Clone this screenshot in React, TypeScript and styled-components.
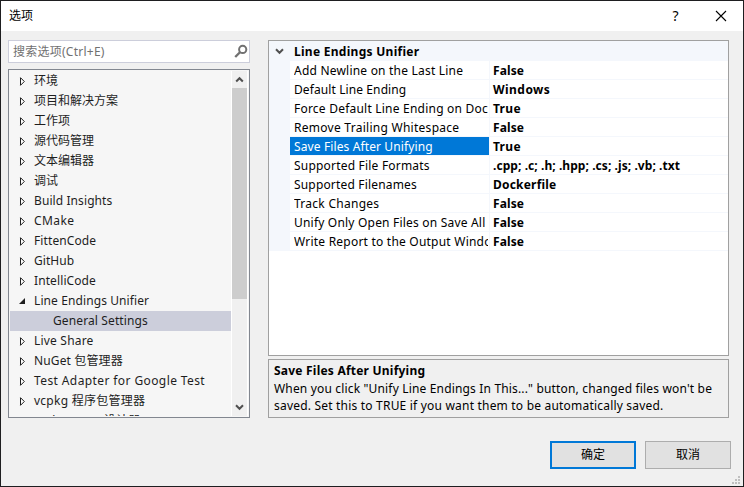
import React from "react";
import styled, { createGlobalStyle } from "styled-components";

const Global = createGlobalStyle`
  * { box-sizing: border-box; }
  body { margin: 0; overflow: hidden; }
`;

const Dialog = styled.div`
  width: 744px;
  height: 487px;
  border: 1px solid #1e1e20;
  background: #f0f0f0;
  color: #000;
  font: 12px/20px "Noto Sans", "Noto Sans CJK SC", sans-serif;
  display: flex;
  flex-direction: column;
  white-space: nowrap;
`;

const TitleBar = styled.header`
  height: 30px;
  flex: none;
  background: #fff;
  display: flex;
  align-items: center;
  padding-left: 8px;
`;

const Title = styled.span`
  flex: 1;
  line-height: 28px;
`;

const CaptionButton = styled.div`
  width: 45px;
  height: 30px;
  display: flex;
  align-items: center;
  justify-content: center;
  font-size: 14px;
  line-height: 28px;
`;

const Body = styled.div`
  display: flex;
  gap: 18px;
  padding: 9px 14px 0 7px;
  height: 387px;
  flex: none;
`;

const LeftPane = styled.div`
  width: 242px;
  display: flex;
  flex-direction: column;
  gap: 6px;
`;

const SearchBox = styled.div`
  height: 23px;
  flex: none;
  border: 1px solid #cccedb;
  background: #fff;
  color: #717171;
  display: flex;
  justify-content: space-between;
  padding: 0 1px 0 4px;
  line-height: 21px;
`;

const Tree = styled.div`
  height: 349px;
  border: 1px solid #828790;
  background: #f6f6f6;
  padding: 1px;
  display: flex;
`;

const TreeList = styled.div`
  flex: 1;
  height: 345px;
  overflow: hidden;
  color: #1e1e1e;
`;

const TreeRow = styled.div<{ $child?: boolean }>`
  height: 20px;
  line-height: 20px;
  display: flex;
  align-items: flex-start;
  gap: 8px;
  padding-left: ${(p) => (p.$child ? 43 : 8)}px;
  background: ${(p) => (p.$child ? "#cccedb" : "transparent")};
`;

const ArrowIcon = styled.svg`
  flex: none;
  margin-top: 5px;
`;

const Fitted = styled.span<{ $spacing: number }>`
  letter-spacing: ${(p) => p.$spacing}px;
`;

const ScrollBar = styled.div`
  width: 17px;
  background: #f0f0f0;
  border-left: 1px solid #fff;
  border-right: 1px solid #fff;
  display: flex;
  flex-direction: column;
`;

const ScrollButton = styled.div`
  height: 17px;
  display: flex;
  align-items: center;
  justify-content: center;
`;

const ScrollThumb = styled.div`
  height: 211px;
  background: #cdcdcd;
`;

const Spacer = styled.div`
  flex: 1;
`;

const RightPane = styled.div`
  width: 461px;
  display: flex;
  flex-direction: column;
  gap: 3px;
`;

const PropertyGrid = styled.div`
  height: 316px;
  border: 1px solid #a0a0a0;
  background: #fff;
`;

const Category = styled.div`
  height: 20px;
  background: #f4f7fc;
  display: flex;
  align-items: flex-end;
  font-weight: 700;
  line-height: 19px;
`;

const Gutter = styled.div`
  width: 21px;
  height: 19px;
  flex: none;
  background: #f4f7fc;
  display: flex;
  align-items: center;
  justify-content: center;
`;

const CategoryName = styled.span`
  padding-left: 4px;
`;

const PropertyRow = styled.div`
  height: 19px;
  line-height: 20px;
  display: flex;
`;

const PropertyName = styled.div<{ $selected?: boolean }>`
  width: 200px;
  height: 19px;
  border-right: 1px solid #f4f7fc;
  border-bottom: 1px solid #f4f7fc;
  padding: 0 1px 0 4px;
  background: ${(p) => (p.$selected ? "#0078d7" : "#fff")};
  background-clip: padding-box;
  color: ${(p) => (p.$selected ? "#fff" : "#000")};
`;

const Clip = styled.div`
  overflow: hidden;
  height: 18px;
`;

const PropertyValue = styled.div`
  flex: 1;
  border-bottom: 1px solid #f4f7fc;
  padding-left: 3px;
  font-weight: 700;
`;

const Description = styled.div`
  height: 59px;
  border: 1px solid #a0a0a0;
  padding: 2px 5px;
  line-height: 17px;
`;

const DescriptionTitle = styled.div`
  font-weight: 700;
  height: 18px;
`;

const DescriptionLine = styled.div`
  height: 17px;
`;

const Footer = styled.footer`
  flex: 1;
  display: flex;
  padding: 23px 2px 0 0;
  justify-content: flex-end;
`;

const Button = styled.button<{ $primary?: boolean }>`
  width: 86px;
  height: 28px;
  margin-right: 9px;
  padding: 0;
  font: inherit;
  line-height: 22px;
  color: #000;
  background: #e1e1e1;
  border: ${(p) => (p.$primary ? "2px solid #0078d7" : "1px solid #adadad")};
`;

const Grip = styled.svg`
  align-self: flex-end;
  margin: 0 1px 2px -8px;
`;

type Node = { name: string; spacing: number; open?: boolean; child?: boolean };

const nodes: Node[] = [
  { name: "环境", spacing: 0 },
  { name: "项目和解决方案", spacing: 0 },
  { name: "工作项", spacing: 0 },
  { name: "源代码管理", spacing: 0 },
  { name: "文本编辑器", spacing: 0 },
  { name: "调试", spacing: 0 },
  { name: "Build Insights", spacing: 0.09 },
  { name: "CMake", spacing: 0.4 },
  { name: "FittenCode", spacing: 0.1 },
  { name: "GitHub", spacing: 0.05 },
  { name: "IntelliCode", spacing: 0.1 },
  { name: "Line Endings Unifier", spacing: 0.1, open: true },
  { name: "General Settings", spacing: 0.12, child: true },
  { name: "Live Share", spacing: 0.2 },
  { name: "NuGet 包管理器", spacing: 0.13 },
  { name: "Test Adapter for Google Test", spacing: 0.4 },
  { name: "vcpkg 程序包管理器", spacing: 0.25 },
  { name: "Web Forms 设计器", spacing: 0.3 },
];

type Property = { name: string; value: string; ns: number; vs: number };

const properties: Property[] = [
  { name: "Add Newline on the Last Line", value: "False", ns: 0.21, vs: 0.1 },
  { name: "Default Line Ending", value: "Windows", ns: 0.1, vs: 0.45 },
  { name: "Force Default Line Ending on Document Save", value: "True", ns: 0.22, vs: 0.3 },
  { name: "Remove Trailing Whitespace", value: "False", ns: 0.27, vs: 0.1 },
  { name: "Save Files After Unifying", value: "True", ns: 0.12, vs: 0.3 },
  { name: "Supported File Formats", value: ".cpp; .c; .h; .hpp; .cs; .js; .vb; .txt", ns: 0.2, vs: 0.06 },
  { name: "Supported Filenames", value: "Dockerfile", ns: 0.17, vs: 0.2 },
  { name: "Track Changes", value: "False", ns: 0.27, vs: 0.1 },
  { name: "Unify Only Open Files on Save All", value: "False", ns: 0.2, vs: 0.1 },
  { name: "Write Report to the Output Window", value: "False", ns: 0.22, vs: 0.1 },
];

const Arrow = ({ open }: { open?: boolean }) => (
  <ArrowIcon width="8" height="11" viewBox="0 0 8 11">
    {open ? (
      <path d="M7 2v6H1z" fill="#1e1e1e" />
    ) : (
      <path d="M2.5 1.7v7.6L6.3 5.5z" fill="#fff" stroke="#1e1e1e" />
    )}
  </ArrowIcon>
);

const Chevron = ({ up }: { up?: boolean }) => (
  <svg width="9" height="7" viewBox="0 0 9 7">
    <path
      d={up ? "M1.2 5.5L4.5 2.2 7.8 5.5" : "M1 1.3L4.5 4.8 8 1.3"}
      fill="none"
      stroke="#505050"
      strokeWidth="2"
    />
  </svg>
);

export default function App() {
  return (
    <>
      <Global />
      <Dialog>
        <TitleBar>
          <Title>选项</Title>
          <CaptionButton>?</CaptionButton>
          <CaptionButton>
            <svg width="12" height="12" viewBox="0 0 12 12">
              <path d="M1 1l10 10M11 1L1 11" stroke="#000" strokeWidth="1.1" />
            </svg>
          </CaptionButton>
        </TitleBar>
        <Body>
          <LeftPane>
            <SearchBox>
              <Fitted $spacing={0.25}>搜索选项(Ctrl+E)</Fitted>
              <svg width="14" height="21" viewBox="0 0 14 21">
                <circle cx="8.7" cy="8.4" r="3.6" fill="none" stroke="#717171" strokeWidth="2" />
                <path d="M6.2 11L1.2 16" stroke="#717171" strokeWidth="2.4" />
              </svg>
            </SearchBox>
            <Tree>
              <TreeList>
                {nodes.map((n) => (
                  <TreeRow key={n.name} $child={n.child}>
                    {!n.child && <Arrow open={n.open} />}
                    <Fitted $spacing={n.spacing}>{n.name}</Fitted>
                  </TreeRow>
                ))}
              </TreeList>
              <ScrollBar>
                <ScrollButton><Chevron up /></ScrollButton>
                <ScrollThumb />
                <Spacer />
                <ScrollButton><Chevron /></ScrollButton>
              </ScrollBar>
            </Tree>
          </LeftPane>
          <RightPane>
            <PropertyGrid>
              <Category>
                <Gutter><Chevron /></Gutter>
                <CategoryName><Fitted $spacing={0.28}>Line Endings Unifier</Fitted></CategoryName>
              </Category>
              {properties.map((p, i) => (
                <PropertyRow key={p.name}>
                  <Gutter />
                  <PropertyName $selected={i === 4}>
                    <Clip><Fitted $spacing={p.ns}>{p.name}</Fitted></Clip>
                  </PropertyName>
                  <PropertyValue><Fitted $spacing={p.vs}>{p.value}</Fitted></PropertyValue>
                </PropertyRow>
              ))}
            </PropertyGrid>
            <Description>
              <DescriptionTitle><Fitted $spacing={0.22}>Save Files After Unifying</Fitted></DescriptionTitle>
              <DescriptionLine>
                <Fitted $spacing={0.165}>When you click "Unify Line Endings In This..." button, changed files won't be</Fitted>
              </DescriptionLine>
              <DescriptionLine>
                <Fitted $spacing={0.2}>saved. Set this to TRUE if you want them to be automatically saved.</Fitted>
              </DescriptionLine>
            </Description>
          </RightPane>
        </Body>
        <Footer>
          <Button $primary>确定</Button>
          <Button>取消</Button>
          <Grip width="8" height="8" viewBox="0 0 8 8" fill="#bfbfbf">
            <path d="M6 0h2v2H6zM3 3h2v2H3zM6 3h2v2H6zM0 6h2v2H0zM3 6h2v2H3zM6 6h2v2H6z" />
          </Grip>
        </Footer>
      </Dialog>
    </>
  );
}
